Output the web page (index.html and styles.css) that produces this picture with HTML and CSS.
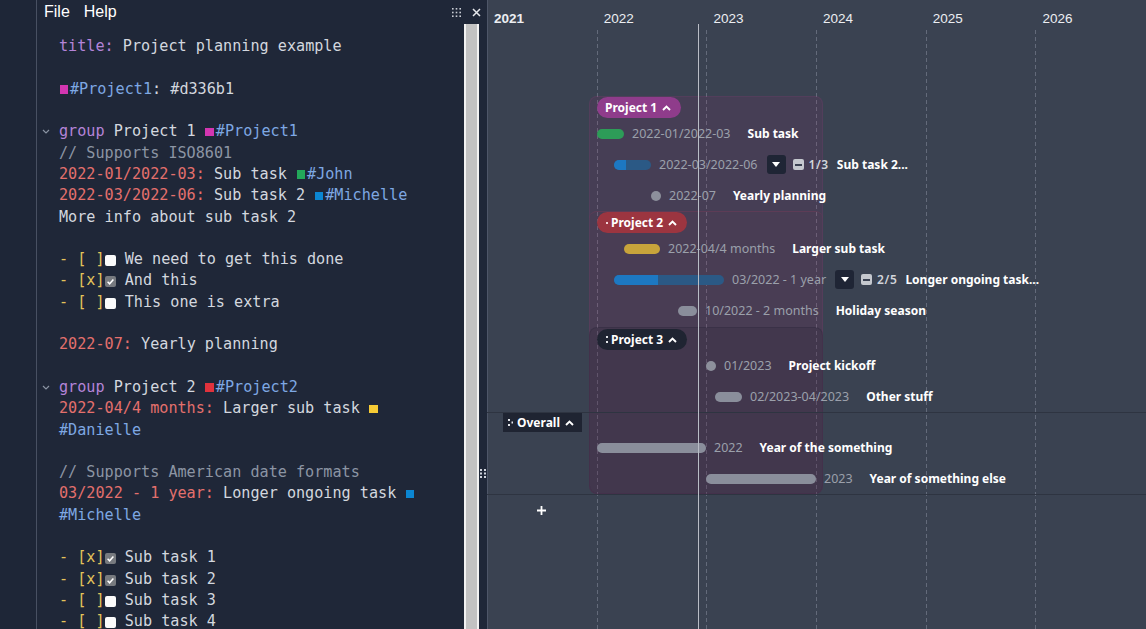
FILE: index.html
```html
<!DOCTYPE html>
<html lang="en">
<head>
<meta charset="utf-8">
<title>Project planning example</title>
<link rel="stylesheet" href="styles.css">
</head>
<body>
<div class="app">
  <div class="gutter"></div>
  <div class="left">
    <div class="menubar">
      <div class="menu"><span>File</span><span>Help</span></div>
      <div class="tools">
        <svg class="grip" width="9" height="9" viewBox="0 0 9 9"><g fill="#c9cdd5"><rect x="0" y="0" width="1.6" height="1.6"/><rect x="3.7" y="0" width="1.6" height="1.6"/><rect x="7.4" y="0" width="1.6" height="1.6"/><rect x="0" y="3.7" width="1.6" height="1.6"/><rect x="3.7" y="3.7" width="1.6" height="1.6"/><rect x="7.4" y="3.7" width="1.6" height="1.6"/><rect x="0" y="7.4" width="1.6" height="1.6"/><rect x="3.7" y="7.4" width="1.6" height="1.6"/><rect x="7.4" y="7.4" width="1.6" height="1.6"/></g></svg>
        <svg class="close" width="9" height="9" viewBox="0 0 9 9"><path d="M1 1L8 8M8 1L1 8" stroke="#e6e8ec" stroke-width="1.5" fill="none"/></svg>
      </div>
    </div>
    <div class="left-body">
      <div class="code">
        <div class="ln"><span class="kw">title:</span> Project planning example</div>
        <div class="ln"></div>
        <div class="ln"><span class="sq c-p1"></span><span class="tag">#Project1</span>: #d336b1</div>
        <div class="ln"></div>
        <div class="ln"><span class="fold"><svg width="8" height="5" viewBox="0 0 8 5"><path d="M1 1L4 4L7 1" stroke="#8a93a2" stroke-width="1.2" fill="none"/></svg></span><span class="kw">group</span> Project 1 <span class="sq c-p1"></span><span class="tag">#Project1</span></div>
        <div class="ln"><span class="cm">// Supports ISO8601</span></div>
        <div class="ln"><span class="dt">2022-01/2022-03:</span> Sub task <span class="sq c-john"></span><span class="tag">#John</span></div>
        <div class="ln"><span class="dt">2022-03/2022-06:</span> Sub task 2 <span class="sq c-mich"></span><span class="tag">#Michelle</span></div>
        <div class="ln">More info about sub task 2</div>
        <div class="ln"></div>
        <div class="ln"><span class="yl">- [ ]</span><span class="cb"></span> We need to get this done</div>
        <div class="ln"><span class="yl">- [x]</span><span class="cb on"><svg width="11" height="11" viewBox="0 0 11 11"><path d="M2.6 5.8L4.6 7.8L8.4 3.4" stroke="#fff" stroke-width="1.5" fill="none"/></svg></span> And this</div>
        <div class="ln"><span class="yl">- [ ]</span><span class="cb"></span> This one is extra</div>
        <div class="ln"></div>
        <div class="ln"><span class="dt">2022-07:</span> Yearly planning</div>
        <div class="ln"></div>
        <div class="ln"><span class="fold"><svg width="8" height="5" viewBox="0 0 8 5"><path d="M1 1L4 4L7 1" stroke="#8a93a2" stroke-width="1.2" fill="none"/></svg></span><span class="kw">group</span> Project 2 <span class="sq c-p2"></span><span class="tag">#Project2</span></div>
        <div class="ln"><span class="dt">2022-04/4 months:</span> Larger sub task <span class="sq c-dan"></span></div>
        <div class="ln"><span class="tag">#Danielle</span></div>
        <div class="ln"></div>
        <div class="ln"><span class="cm">// Supports American date formats</span></div>
        <div class="ln"><span class="dt">03/2022 - 1 year:</span> Longer ongoing task <span class="sq c-mich"></span></div>
        <div class="ln"><span class="tag">#Michelle</span></div>
        <div class="ln"></div>
        <div class="ln"><span class="yl">- [x]</span><span class="cb on"><svg width="11" height="11" viewBox="0 0 11 11"><path d="M2.6 5.8L4.6 7.8L8.4 3.4" stroke="#fff" stroke-width="1.5" fill="none"/></svg></span> Sub task 1</div>
        <div class="ln"><span class="yl">- [x]</span><span class="cb on"><svg width="11" height="11" viewBox="0 0 11 11"><path d="M2.6 5.8L4.6 7.8L8.4 3.4" stroke="#fff" stroke-width="1.5" fill="none"/></svg></span> Sub task 2</div>
        <div class="ln"><span class="yl">- [ ]</span><span class="cb"></span> Sub task 3</div>
        <div class="ln"><span class="yl">- [ ]</span><span class="cb"></span> Sub task 4</div>
      </div>
      <div class="scrollbar"><div class="thumb"></div></div>
      <div class="splitter">
        <svg width="6" height="9" viewBox="0 0 6 9"><g fill="#d0d4dc"><rect x="0" y="0" width="2" height="2"/><rect x="4" y="0" width="2" height="2"/><rect x="0" y="3.5" width="2" height="2"/><rect x="4" y="3.5" width="2" height="2"/><rect x="0" y="7" width="2" height="2"/><rect x="4" y="7" width="2" height="2"/></g></svg>
      </div>
    </div>
  </div>

  <div class="gantt">
    <div class="cols">
      <div class="col first"><div class="year bold">2021</div><div class="vline"></div></div>
      <div class="col"><div class="year">2022</div><div class="vline"></div></div>
      <div class="col"><div class="year">2023</div><div class="vline"></div></div>
      <div class="col"><div class="year">2024</div><div class="vline"></div></div>
      <div class="col"><div class="year">2025</div><div class="vline"></div></div>
      <div class="col"><div class="year">2026</div><div class="vline"></div></div>
    </div>

    <div class="box box1"></div>
    <div class="box box2"></div>
    <div class="box box3"></div>

    <div class="rows">
      <div class="row row-pill" style="padding-left:110px">
        <span class="pill pill1">Project 1<svg class="chev" width="9" height="6" viewBox="0 0 9 6"><path d="M1 5L4.5 1.5L8 5" stroke="#fff" stroke-width="1.9" fill="none"/></svg></span>
      </div>
      <div class="row" style="padding-left:110px">
        <span class="bar green" style="width:27px"></span><span class="date">2022-01/2022-03</span><span class="name">Sub task</span>
      </div>
      <div class="row" style="padding-left:127px">
        <span class="bar blue" style="width:37px"><span class="prog" style="width:12px"></span></span><span class="date">2022-03/2022-06</span>
        <span class="dd"><svg width="8" height="5" viewBox="0 0 8 5"><path d="M0 0H8L4 5Z" fill="#fff"/></svg></span><span class="mini"></span><span class="frac">1/3</span><span class="name">Sub task 2...</span>
      </div>
      <div class="row" style="padding-left:164px">
        <span class="dot"></span><span class="date">2022-07</span><span class="name">Yearly planning</span>
      </div>

      <div class="row row-pill" style="padding-left:110px">
        <span class="pill pill2"><svg class="handle" width="2" height="2" viewBox="0 0 2 2"><rect width="2" height="2" fill="#f3d6d9"/></svg>Project 2<svg class="chev" width="9" height="6" viewBox="0 0 9 6"><path d="M1 5L4.5 1.5L8 5" stroke="#fff" stroke-width="1.9" fill="none"/></svg></span>
      </div>
      <div class="row" style="padding-left:137px">
        <span class="bar yellow" style="width:36px"></span><span class="date">2022-04/4 months</span><span class="name">Larger sub task</span>
      </div>
      <div class="row" style="padding-left:127px">
        <span class="bar blue" style="width:110px"><span class="prog" style="width:44px"></span></span><span class="date">03/2022 - 1 year</span>
        <span class="dd"><svg width="8" height="5" viewBox="0 0 8 5"><path d="M0 0H8L4 5Z" fill="#fff"/></svg></span><span class="mini"></span><span class="frac">2/5</span><span class="name">Longer ongoing task...</span>
      </div>
      <div class="row" style="padding-left:191px">
        <span class="bar gray" style="width:19px"></span><span class="date">10/2022 - 2 months</span><span class="name">Holiday season</span>
      </div>

      <div class="row row-pill spaced" style="padding-left:110px">
        <span class="pill pill3"><svg class="handle" width="2" height="7" viewBox="0 0 2 7"><rect y="0" width="2" height="2" fill="#e6e8ec"/><rect y="5" width="2" height="2" fill="#e6e8ec"/></svg>Project 3<svg class="chev" width="9" height="6" viewBox="0 0 9 6"><path d="M1 5L4.5 1.5L8 5" stroke="#fff" stroke-width="1.9" fill="none"/></svg></span>
      </div>
      <div class="row" style="padding-left:219px">
        <span class="dot"></span><span class="date">01/2023</span><span class="name">Project kickoff</span>
      </div>
      <div class="row" style="padding-left:228px">
        <span class="bar gray" style="width:27px"></span><span class="date">02/2023-04/2023</span><span class="name">Other stuff</span>
      </div>

      <div class="overall">
        <div class="row-label">
          <span class="olabel"><svg class="handle" width="5" height="7" viewBox="0 0 5 7"><rect y="0" width="2" height="2" fill="#e6e8ec"/><rect y="5" width="2" height="2" fill="#e6e8ec"/><rect x="3.5" y="2.5" width="1.5" height="2" fill="#e6e8ec"/></svg>Overall<svg class="chev" width="9" height="6" viewBox="0 0 9 6"><path d="M1 5L4.5 1.5L8 5" stroke="#fff" stroke-width="1.9" fill="none"/></svg></span>
        </div>
        <div class="row" style="padding-left:110px">
          <span class="bar gray" style="width:109px"></span><span class="date">2022</span><span class="name">Year of the something</span>
        </div>
        <div class="row" style="padding-left:219px">
          <span class="bar gray" style="width:110px"></span><span class="date">2023</span><span class="name">Year of something else</span>
        </div>
      </div>

      <div class="row add-row">
        <svg width="9" height="9" viewBox="0 0 9 9"><path d="M4.5 0V9M0 4.5H9" stroke="#fff" stroke-width="1.8"/></svg>
      </div>
    </div>

    <div class="today"></div>
  </div>
</div>
</body>
</html>
```
FILE: styles.css
```css
* { box-sizing: border-box; }

body {
  margin: 0;
  width: 1146px;
  height: 629px;
  overflow: hidden;
  background: #1e2637;
}

.app {
  display: flex;
  height: 629px;
}

.gutter {
  flex: none;
  width: 37px;
  border-right: 1px solid #485062;
  background: #1e2637;
}

/* ---------- left editor ---------- */
.left {
  flex: none;
  width: 450px;
  display: flex;
  flex-direction: column;
  background: #1f2738;
}

.menubar {
  flex: none;
  height: 24px;
  display: flex;
  align-items: center;
  justify-content: space-between;
  padding: 0 6px 0 7px;
  font-family: "Liberation Sans", Arial, sans-serif;
  font-size: 16px;
  color: #ffffff;
}

.menu span + span { margin-left: 14px; }

.tools {
  display: flex;
  align-items: center;
  gap: 11px;
}

.tools svg { display: block; }

.left-body {
  flex: 1;
  display: flex;
  min-height: 0;
}

.code {
  flex: 1;
  padding: 12.2px 0 0 22px;
  font-family: "DejaVu Sans Mono", monospace;
  font-size: 15.15px;
  line-height: 21.3px;
  color: #d3d7df;
  overflow: hidden;
}

.ln {
  height: 21.3px;
  white-space: pre;
}

.kw { color: #b584d9; }
.dt { color: #e4706d; }
.tag { color: #7ea8e3; }
.cm { color: #8c95a4; }
.yl { color: #e3c35a; }

.sq {
  display: inline-block;
  width: 8.5px;
  height: 8.5px;
  margin: 0 2px 0 0.5px;
}
.c-p1 { background: #d336b1; }
.c-p2 { background: #e0323c; }
.c-john { background: #23a85a; }
.c-mich { background: #0b86d2; }
.c-dan { background: #f6cb35; }

.cb {
  display: inline-block;
  width: 11px;
  height: 11px;
  margin-left: 0.5px;
  margin-right: -0.5px;
  border-radius: 2px;
  background: #fbfbfb;
  vertical-align: -2px;
}
.cb.on { background: #777a7f; }
.cb svg { display: block; }

.fold {
  display: inline-block;
  width: 22px;
  margin-left: -22px;
  padding-left: 5px;
  vertical-align: middle;
  line-height: 0;
}

.scrollbar {
  flex: none;
  width: 15px;
  background: #f2f2f2;
  display: flex;
  justify-content: center;
}
.thumb {
  width: 11px;
  background: #c2c2c2;
}

.splitter {
  flex: none;
  width: 8px;
  padding-top: 445px;
  display: flex;
  justify-content: center;
  align-items: flex-start;
  background: #1f2738;
}
.splitter svg { display: block; }

/* ---------- gantt ---------- */
.gantt {
  flex: 1;
  position: relative;
  background: #3a4251;
  overflow: hidden;
  font-family: "Noto Sans", "Open Sans", sans-serif;
}

.cols {
  position: absolute;
  inset: 0;
  display: flex;
}

.col {
  flex: none;
  width: 109.7px;
  display: flex;
  flex-direction: column;
}
.col.first { border-left: 1px solid #4e5668; }

.year {
  height: 30px;
  padding: 11px 0 0 7px;
  font-family: "Liberation Sans", Arial, sans-serif;
  font-size: 13.5px;
  line-height: 16px;
  color: #eceef2;
}
.col.first .year { padding-left: 6px; }
.year.bold { font-weight: 700; }

.vline {
  flex: 1;
  width: 1px;
  background: repeating-linear-gradient(to bottom, #636a7a 0 4px, transparent 4px 7px);
}
.col.first .vline { background: none; }

.box {
  position: absolute;
  left: 102px;
  width: 234px;
  border-radius: 8px;
}
.box1 {
  top: 96px;
  height: 398px;
  background: rgba(150, 40, 115, 0.14);
  border: 1px solid rgba(170, 55, 135, 0.12);
}
.box2 {
  top: 211px;
  height: 283px;
  background: rgba(190, 40, 70, 0.03);
  border-top: 1px solid rgba(190, 60, 100, 0.16);
}
.box3 {
  top: 327px;
  height: 167px;
  background: rgba(18, 16, 34, 0.12);
  border: 1px solid rgba(20, 18, 36, 0.15);
}

.rows {
  position: absolute;
  inset: 0;
  padding-top: 96px;
}

.row {
  height: 31px;
  display: flex;
  align-items: center;
  white-space: nowrap;
}

.row-pill {
  height: 21px;
  margin-top: 1px;
}
.row-pill.spaced { margin-top: 3px; }

.pill {
  display: inline-flex;
  align-items: center;
  height: 21px;
  padding: 0 10px 0 8px;
  border-radius: 11px;
  color: #ffffff;
  font-size: 12px;
  font-weight: 700;
}
.pill1 { background: #8f3c8b; }
.pill2 { background: #9c3540; padding-left: 9px; }
.pill3 { background: #1f2432; padding-left: 9px; }

.chev { display: block; margin-left: 5px; }
.handle { display: block; margin-right: 3px; }

.bar {
  flex: none;
  display: block;
  height: 10px;
  border-radius: 5px;
  overflow: hidden;
}
.bar.green { background: #2d9c58; }
.bar.yellow { background: #c8a43b; }
.bar.gray { background: #8a8e9b; }
.bar.blue { background: #2b5985; }
.prog {
  display: block;
  height: 100%;
  background: #1d78c2;
}

.dot {
  flex: none;
  width: 10px;
  height: 10px;
  border-radius: 50%;
  background: #8d909c;
}

.date {
  margin-left: 8px;
  font-size: 12.5px;
  color: #9ba0ab;
}

.name {
  margin-left: 17px;
  font-size: 12px;
  font-weight: 700;
  color: #ffffff;
}

.dd {
  flex: none;
  margin-left: 9px;
  width: 19px;
  height: 19px;
  border-radius: 3px;
  background: #1f2535;
  display: flex;
  align-items: center;
  justify-content: center;
}
.dd svg { display: block; }

.mini {
  flex: none;
  position: relative;
  margin-left: 7px;
  width: 11px;
  height: 11px;
  border-radius: 2px;
  background: #c5c8ce;
}
.mini::after {
  content: "";
  position: absolute;
  left: 2px;
  top: 4.5px;
  width: 7px;
  height: 2px;
  background: #3b4252;
}

.frac {
  margin-left: 5px;
  font-size: 12px;
  font-weight: 600;
  letter-spacing: 0.6px;
  color: #d2d5db;
}
.frac + .name { margin-left: 8px; }

.overall {
  border-top: 1px solid #2e3441;
  border-bottom: 1px solid #2e3441;
}

.row-label {
  height: 19px;
  padding-left: 16px;
  display: flex;
}

.olabel {
  display: inline-flex;
  align-items: center;
  height: 19px;
  padding: 0 8px 0 5px;
  background: #1f2432;
  color: #ffffff;
  font-size: 12px;
  font-weight: 700;
}
.olabel .handle { margin-right: 4px; }

.add-row {
  height: 30px;
  padding-left: 50px;
}
.add-row svg { display: block; }

.today {
  position: absolute;
  left: 211px;
  top: 24px;
  bottom: 0;
  width: 1px;
  background: #b9bdc6;
}
```
